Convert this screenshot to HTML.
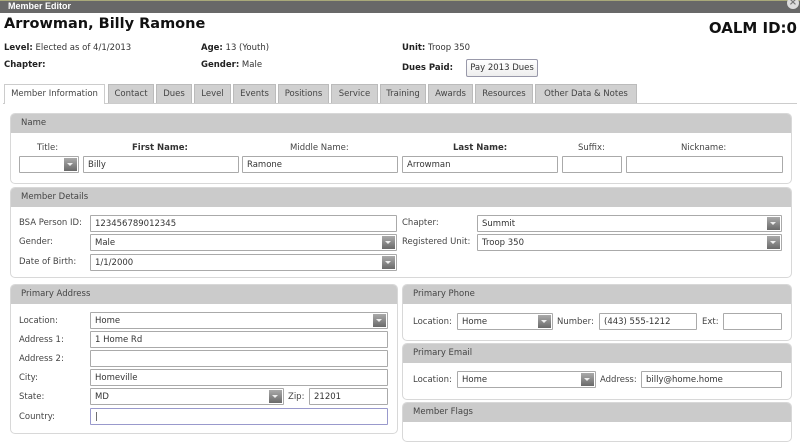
<!DOCTYPE html>
<html><head><style>
*{box-sizing:border-box;margin:0;padding:0}
body{width:800px;height:428px;overflow:hidden;background:#fff;font-family:"DejaVu Sans","Liberation Sans",sans-serif;font-size:8.5px;color:#333;position:relative}
.a{position:absolute;white-space:nowrap}
.tb{left:0;top:0;width:800px;height:13px;background:#686868;border-top:1px solid #a9a97a}
.tb span{position:absolute;left:8px;top:0px;color:#fff;font-weight:bold;font-size:9px;font-family:"Liberation Sans",sans-serif}
.x{right:1px;top:-3px;width:12px;height:12px;border-radius:6px;background:#ddd;color:#777;font-size:10px;line-height:11px;text-align:center;font-weight:bold}
b{color:#222}
.tab{top:84px;height:19px;background:#d0d0d0;border:1px solid #bbb;border-bottom:none;line-height:18px;text-align:center;color:#444}
.tab.on{background:#fff;height:20px;border-color:#ccc}
.pn{border:1px solid #d8d8d8;border-radius:5px;background:#fff;overflow:hidden}
.pn .h{height:19px;background:#cbcbcb;line-height:19px;padding-left:10px;color:#444}
.in{height:17px;border:1px solid #aaa;background:#fff;line-height:16px;padding-left:4px;color:#333;border-radius:1px}
.sel:after{content:"";position:absolute;right:1px;top:1px;width:13px;height:13px;background:linear-gradient(#aaa,#6a6a6a)}
.sel:before{content:"";position:absolute;right:5px;top:6px;border-left:3px solid transparent;border-right:3px solid transparent;border-top:3px solid #eee;z-index:2}
.l{color:#444}
</style></head><body>
<div class="a tb"><span>Member Editor</span></div>
<div class="a x">×</div>
<div class="a" style="left:4px;top:16px;font-size:14.5px;font-weight:bold;color:#111">Arrowman, Billy Ramone</div>
<div class="a" style="right:3px;top:19px;font-size:15px;font-weight:bold;color:#111">OALM ID:0</div>
<div class="a" style="left:4px;top:43px"><b>Level:</b> Elected as of 4/1/2013</div>
<div class="a" style="left:4px;top:60px"><b>Chapter:</b></div>
<div class="a" style="left:201px;top:43px"><b>Age:</b> 13 (Youth)</div>
<div class="a" style="left:201px;top:60px"><b>Gender:</b> Male</div>
<div class="a" style="left:402px;top:43px"><b>Unit:</b> Troop 350</div>
<div class="a" style="left:402px;top:63px"><b>Dues Paid:</b></div>
<div class="a" style="left:466px;top:59px;width:72px;height:18px;border:1px solid #99a;border-radius:2px;background:linear-gradient(#fff,#eee);line-height:17px;text-align:center;color:#333">Pay 2013 Dues</div>

<div class="a" style="left:3px;top:103px;width:794px;height:1px;background:#ccc"></div>
<div class="a tab on" style="left:4px;width:101px">Member Information</div>
<div class="a tab" style="left:108px;width:46px">Contact</div>
<div class="a tab" style="left:156px;width:36px">Dues</div>
<div class="a tab" style="left:194px;width:37px">Level</div>
<div class="a tab" style="left:233px;width:43px">Events</div>
<div class="a tab" style="left:278px;width:51px">Positions</div>
<div class="a tab" style="left:331px;width:47px">Service</div>
<div class="a tab" style="left:380px;width:46px">Training</div>
<div class="a tab" style="left:428px;width:45px">Awards</div>
<div class="a tab" style="left:475px;width:58px">Resources</div>
<div class="a tab" style="left:535px;width:102px">Other Data &amp; Notes</div>

<div class="a pn" style="left:10px;top:113px;width:782px;height:71px"><div class="h">Name</div></div>
<div class="a l" style="left:37px;top:143px">Title:</div>
<div class="a" style="left:132px;top:143px;font-weight:bold;color:#333">First Name:</div>
<div class="a l" style="left:290px;top:143px">Middle Name:</div>
<div class="a" style="left:453px;top:143px;font-weight:bold;color:#333">Last Name:</div>
<div class="a l" style="left:578px;top:143px">Suffix:</div>
<div class="a l" style="left:681px;top:143px">Nickname:</div>
<div class="a in sel" style="left:19px;top:156px;width:60px"></div>
<div class="a in" style="left:83px;top:156px;width:156px">Billy</div>
<div class="a in" style="left:242px;top:156px;width:156px">Ramone</div>
<div class="a in" style="left:402px;top:156px;width:156px">Arrowman</div>
<div class="a in" style="left:562px;top:156px;width:60px"></div>
<div class="a in" style="left:626px;top:156px;width:157px"></div>

<div class="a pn" style="left:10px;top:187px;width:782px;height:91px"><div class="h">Member Details</div></div>
<div class="a l" style="left:19px;top:218px">BSA Person ID:</div>
<div class="a l" style="left:19px;top:237px">Gender:</div>
<div class="a l" style="left:19px;top:257px">Date of Birth:</div>
<div class="a in" style="left:90px;top:215px;width:307px">123456789012345</div>
<div class="a in sel" style="left:90px;top:234px;width:307px">Male</div>
<div class="a in sel" style="left:90px;top:254px;width:307px">1/1/2000</div>
<div class="a l" style="left:402px;top:218px">Chapter:</div>
<div class="a l" style="left:402px;top:237px">Registered Unit:</div>
<div class="a in sel" style="left:477px;top:215px;width:305px">Summit</div>
<div class="a in sel" style="left:477px;top:234px;width:305px">Troop 350</div>

<div class="a pn" style="left:10px;top:284px;width:388px;height:150px"><div class="h">Primary Address</div></div>
<div class="a l" style="left:19px;top:316px">Location:</div>
<div class="a l" style="left:19px;top:335px">Address 1:</div>
<div class="a l" style="left:19px;top:354px">Address 2:</div>
<div class="a l" style="left:19px;top:373px">City:</div>
<div class="a l" style="left:19px;top:392px">State:</div>
<div class="a l" style="left:19px;top:412px">Country:</div>
<div class="a in sel" style="left:90px;top:312px;width:298px">Home</div>
<div class="a in" style="left:90px;top:331px;width:298px">1 Home Rd</div>
<div class="a in" style="left:90px;top:350px;width:298px"></div>
<div class="a in" style="left:90px;top:369px;width:298px">Homeville</div>
<div class="a in sel" style="left:90px;top:388px;width:194px">MD</div>
<div class="a l" style="left:288px;top:392px">Zip:</div>
<div class="a in" style="left:309px;top:388px;width:79px">21201</div>
<div class="a in" style="left:90px;top:408px;width:298px;border-color:#99c">|</div>

<div class="a pn" style="left:402px;top:284px;width:390px;height:57px"><div class="h">Primary Phone</div></div>
<div class="a l" style="left:413px;top:317px">Location:</div>
<div class="a in sel" style="left:457px;top:313px;width:96px">Home</div>
<div class="a l" style="left:557px;top:317px">Number:</div>
<div class="a in" style="left:599px;top:313px;width:98px">(443) 555-1212</div>
<div class="a l" style="left:702px;top:317px">Ext:</div>
<div class="a in" style="left:723px;top:313px;width:59px"></div>

<div class="a pn" style="left:402px;top:343px;width:390px;height:57px"><div class="h">Primary Email</div></div>
<div class="a l" style="left:413px;top:375px">Location:</div>
<div class="a in sel" style="left:457px;top:371px;width:139px">Home</div>
<div class="a l" style="left:600px;top:375px">Address:</div>
<div class="a in" style="left:641px;top:371px;width:141px">billy@home.home</div>

<div class="a pn" style="left:402px;top:402px;width:390px;height:40px"><div class="h">Member Flags</div></div>
</body></html>
